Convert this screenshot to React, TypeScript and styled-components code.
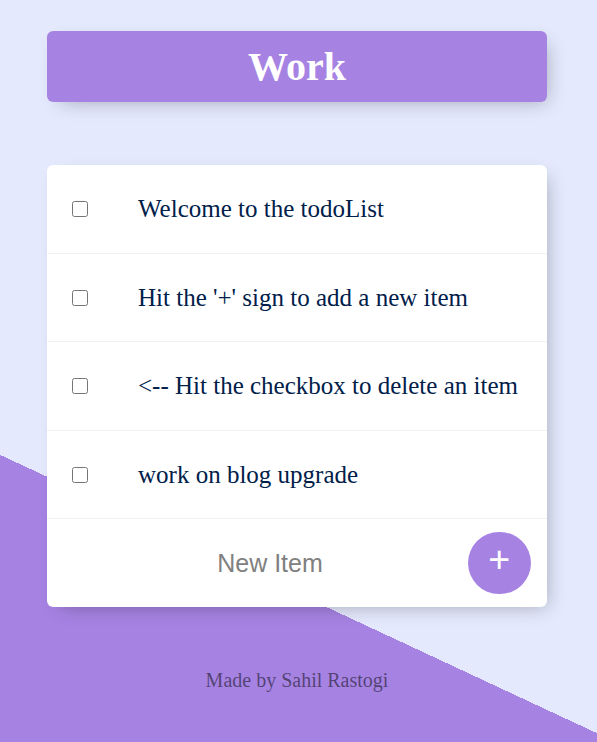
import React, { useState } from 'react';
import styled, { createGlobalStyle } from 'styled-components';

const GlobalStyle = createGlobalStyle`
  html, body {
    margin: 0;
    padding: 0;
  }
  body {
    font-family: "Liberation Serif", "Times New Roman", serif;
    background-color: #e4e9fd;
  }
`;

const Page = styled.div`
  min-height: 1188px;
  padding: 31px 3px 0 0;
  box-sizing: border-box;
  background-color: #e4e9fd;
  background-image: linear-gradient(25deg, #a683e3 50%, #e4e9fd 50%);
`;

const Box = styled.div<{ $top?: number }>`
  width: 500px;
  margin: ${(p) => p.$top ?? 0}px auto 0;
  background: #fff;
  border-radius: 6.25px;
  box-shadow: 6.25px 6.25px 18.75px -6.25px rgba(0, 0, 0, 0.3);
`;

const Heading = styled(Box)`
  background-color: #a683e3;
  text-align: center;
`;

const Title = styled.h1`
  margin: 0;
  padding: 12.5px;
  font-size: 40px;
  font-weight: bold;
  line-height: 46px;
  color: #fff;
`;

const Item = styled.div`
  min-height: 87.5px;
  display: flex;
  align-items: center;
  border-bottom: 1.25px solid #f1f1f1;

  &:last-child {
    border-bottom: 0;
  }
`;

const Check = styled.input`
  width: 16px;
  height: 16px;
  margin: 25px;
  flex-shrink: 0;
`;

const Text = styled.p<{ $done: boolean }>`
  margin: 0;
  padding: 25px;
  font-size: 25px;
  font-weight: 200;
  color: #00204a;
  text-decoration: ${(p) => (p.$done ? 'line-through' : 'none')};
  text-decoration-color: #a683e3;
`;

const Form = styled.form`
  min-height: 87.5px;
  display: flex;
  align-items: center;
  margin-left: 25px;
`;

const NewInput = styled.input`
  width: 391px;
  height: 75px;
  padding: 1px 2.5px;
  border: none;
  background: transparent;
  text-align: center;
  font-family: "Liberation Sans", Arial, sans-serif;
  font-size: 25px;
  font-weight: 200;
  color: #000;

  &::placeholder {
    color: grey;
    opacity: 1;
  }

  &:focus {
    outline: none;
    box-shadow: inset 0 -3.75px 0 0 #a683e3;
  }
`;

const AddButton = styled.button`
  width: 62.5px;
  min-height: 62.5px;
  padding: 0 0 7.5px;
  border: 0;
  border-radius: 50%;
  background-color: #a683e3;
  color: #fff;
  font-family: "Liberation Sans", Arial, sans-serif;
  font-size: 37.5px;
  line-height: 1;
  cursor: pointer;
`;

const Footer = styled.footer`
  margin-top: 62.5px;
  text-align: center;
  font-size: 20px;
  color: rgba(0, 0, 0, 0.5);
`;

const items = [
  'Welcome to the todoList',
  "Hit the '+' sign to add a new item",
  '<-- Hit the checkbox to delete an item',
  'work on blog upgrade',
];

export default function App() {
  const [done, setDone] = useState<boolean[]>(items.map(() => false));

  return (
    <Page>
      <GlobalStyle />
      <Heading>
        <Title>Work</Title>
      </Heading>
      <Box $top={63.25}>
        {items.map((text, i) => (
          <Item key={text}>
            <Check
              type="checkbox"
              checked={done[i]}
              onChange={() => setDone(done.map((d, j) => (j === i ? !d : d)))}
            />
            <Text $done={done[i]}>{text}</Text>
          </Item>
        ))}
        <Item as={Form} onSubmit={(e: React.FormEvent) => e.preventDefault()}>
          <NewInput type="text" placeholder="New Item" autoComplete="off" />
          <AddButton type="submit">+</AddButton>
        </Item>
      </Box>
      <Footer>Made by Sahil Rastogi</Footer>
    </Page>
  );
}
